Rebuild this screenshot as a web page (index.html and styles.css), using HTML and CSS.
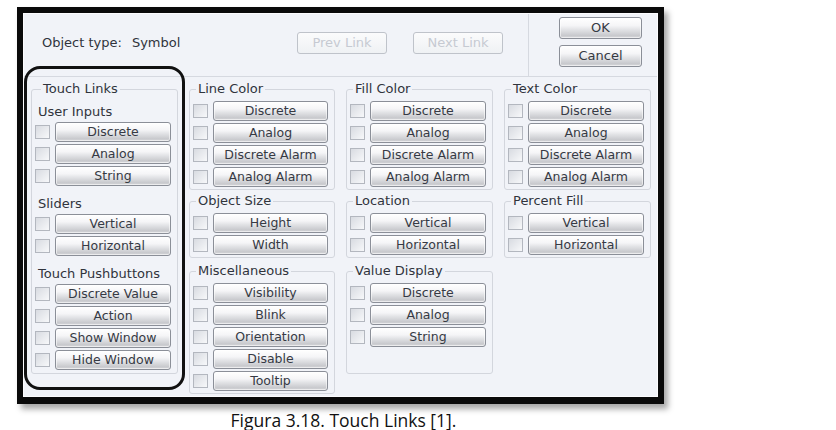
FILE: index.html
```html
<!DOCTYPE html>
<html lang="en">
<head>
<meta charset="utf-8">
<title>Touch Links</title>
<link rel="stylesheet" href="styles.css">
</head>
<body>
<figure class="figure">
  <div class="dialog">
    <div class="dialog-inner">
      <div class="topbar">
        <div class="objinfo">
          <span class="objtype">Object type:</span>
          <span class="objname">Symbol</span>
          <div class="nav">
            <button class="btn btn-nav" disabled>Prev Link</button>
            <button class="btn btn-nav" disabled>Next Link</button>
          </div>
        </div>
        <div class="actions">
          <button class="btn btn-action">OK</button>
          <button class="btn btn-action">Cancel</button>
        </div>
      </div>

      <div class="groups">
        <fieldset class="group touch">
          <legend>Touch Links</legend>
          <div class="sub sub-first">User Inputs</div>
          <div class="rows">
            <div class="row"><span class="chk"></span><button class="btn">Discrete</button></div>
            <div class="row"><span class="chk"></span><button class="btn">Analog</button></div>
            <div class="row"><span class="chk"></span><button class="btn">String</button></div>
          </div>
          <div class="sub">Sliders</div>
          <div class="rows">
            <div class="row"><span class="chk"></span><button class="btn">Vertical</button></div>
            <div class="row"><span class="chk"></span><button class="btn">Horizontal</button></div>
          </div>
          <div class="sub">Touch Pushbuttons</div>
          <div class="rows">
            <div class="row"><span class="chk"></span><button class="btn">Discrete Value</button></div>
            <div class="row"><span class="chk"></span><button class="btn">Action</button></div>
            <div class="row"><span class="chk"></span><button class="btn">Show Window</button></div>
            <div class="row"><span class="chk"></span><button class="btn">Hide Window</button></div>
          </div>
        </fieldset>

        <fieldset class="group">
          <legend>Line Color</legend>
          <div class="rows">
            <div class="row"><span class="chk"></span><button class="btn">Discrete</button></div>
            <div class="row"><span class="chk"></span><button class="btn">Analog</button></div>
            <div class="row"><span class="chk"></span><button class="btn">Discrete Alarm</button></div>
            <div class="row"><span class="chk"></span><button class="btn">Analog Alarm</button></div>
          </div>
        </fieldset>

        <fieldset class="group">
          <legend>Fill Color</legend>
          <div class="rows">
            <div class="row"><span class="chk"></span><button class="btn">Discrete</button></div>
            <div class="row"><span class="chk"></span><button class="btn">Analog</button></div>
            <div class="row"><span class="chk"></span><button class="btn">Discrete Alarm</button></div>
            <div class="row"><span class="chk"></span><button class="btn">Analog Alarm</button></div>
          </div>
        </fieldset>

        <fieldset class="group">
          <legend>Text Color</legend>
          <div class="rows">
            <div class="row"><span class="chk"></span><button class="btn">Discrete</button></div>
            <div class="row"><span class="chk"></span><button class="btn">Analog</button></div>
            <div class="row"><span class="chk"></span><button class="btn">Discrete Alarm</button></div>
            <div class="row"><span class="chk"></span><button class="btn">Analog Alarm</button></div>
          </div>
        </fieldset>

        <fieldset class="group">
          <legend>Object Size</legend>
          <div class="rows">
            <div class="row"><span class="chk"></span><button class="btn">Height</button></div>
            <div class="row"><span class="chk"></span><button class="btn">Width</button></div>
          </div>
        </fieldset>

        <fieldset class="group">
          <legend>Location</legend>
          <div class="rows">
            <div class="row"><span class="chk"></span><button class="btn">Vertical</button></div>
            <div class="row"><span class="chk"></span><button class="btn">Horizontal</button></div>
          </div>
        </fieldset>

        <fieldset class="group">
          <legend>Percent Fill</legend>
          <div class="rows">
            <div class="row"><span class="chk"></span><button class="btn">Vertical</button></div>
            <div class="row"><span class="chk"></span><button class="btn">Horizontal</button></div>
          </div>
        </fieldset>

        <fieldset class="group group-late">
          <legend>Miscellaneous</legend>
          <div class="rows">
            <div class="row"><span class="chk"></span><button class="btn">Visibility</button></div>
            <div class="row"><span class="chk"></span><button class="btn">Blink</button></div>
            <div class="row"><span class="chk"></span><button class="btn">Orientation</button></div>
            <div class="row"><span class="chk"></span><button class="btn">Disable</button></div>
            <div class="row"><span class="chk"></span><button class="btn">Tooltip</button></div>
          </div>
        </fieldset>

        <fieldset class="group group-late group-value">
          <legend>Value Display</legend>
          <div class="rows">
            <div class="row"><span class="chk"></span><button class="btn">Discrete</button></div>
            <div class="row"><span class="chk"></span><button class="btn">Analog</button></div>
            <div class="row"><span class="chk"></span><button class="btn">String</button></div>
          </div>
        </fieldset>
      </div>

      <div class="callout"></div>
    </div>
  </div>
  <figcaption class="caption">Figura 3.18. Touch Links [1].</figcaption>
</figure>
</body>
</html>
```

FILE: styles.css
```css
html, body {
  margin: 0;
  background: #ffffff;
}

body {
  width: 836px;
  height: 430px;
  overflow: hidden;
}

.figure {
  margin: 0;
  padding: 7px 0 0 17px;
}

/* Dialog window with its heavy black frame */
.dialog {
  width: 647px;
  height: 397px;
  box-sizing: border-box;
  border: 6px solid #0a0a0a;
  border-bottom-width: 7px;
  background: #f1f3f8;
  box-shadow: 4px 5px 6px rgba(0, 0, 0, 0.35);
  font-family: "DejaVu Sans", sans-serif;
  color: #30343c;
}

.dialog-inner {
  position: relative;
  height: 100%;
  box-sizing: border-box;
  border: 1px solid #fcfcfe;
  overflow: hidden;
}

/* Header: object type, link navigation, OK / Cancel */
.topbar {
  display: flex;
  height: 62px;
  border-bottom: 1px solid #d6d9e0;
}

.objinfo {
  width: 505px;
  box-sizing: border-box;
  display: flex;
  align-items: flex-start;
  padding: 18px 25px 0 18px;
  border-right: 1px solid #d6d9e0;
  font-size: 13px;
  line-height: 22px;
}

.objname {
  margin-left: 10px;
}

.nav {
  display: flex;
  gap: 26px;
  margin-left: auto;
}

.actions {
  display: flex;
  flex-direction: column;
  gap: 6px;
  padding: 3px 0 0 30px;
}

/* Silver push buttons */
.btn {
  height: 20px;
  box-sizing: border-box;
  padding: 0;
  border: 1px solid #8b8f98;
  border-radius: 3px;
  background: linear-gradient(#ffffff 0%, #f5f5f7 38%, #e2e3e6 58%, #c8c9cd 88%, #d8d9dc 100%);
  box-shadow: inset 0 0 0 1px rgba(255, 255, 255, 0.55);
  font: 12.5px/18px "DejaVu Sans", sans-serif;
  color: #363a44;
  text-align: center;
  white-space: nowrap;
}

.btn-nav {
  width: 90px;
  height: 22px;
  border-color: #bfc3ca;
  background: linear-gradient(#fbfbfc, #eff1f4);
  box-shadow: none;
  color: #c6cad2;
  font-size: 13px;
}

.btn-action {
  width: 83px;
  height: 22px;
  font-size: 13px;
}

/* Link groups */
.groups {
  display: grid;
  grid-template-columns: 147px 146px 147px 147px;
  column-gap: 11px;
  row-gap: 3px;
  align-items: start;
  padding: 4px 0 0 7px;
}

.group {
  margin: 0;
  min-width: 0;
  padding: 4px 6px 2px 3px;
  border: 1px solid #d3d6dd;
  border-radius: 3px;
}

.group legend {
  margin-left: 3px;
  padding: 0 2px;
  font-size: 13px;
  line-height: 16px;
  color: #30343c;
}

.group-late {
  margin-top: 2px;
}

.group-value {
  padding-bottom: 26px;
}

.touch {
  grid-row: 1 / span 3;
  padding: 7px 6px 3px 3px;
}

.touch legend {
  margin-left: 6px;
}

.sub {
  margin: 10px 0 2px 3px;
  font-size: 13px;
  line-height: 16px;
}

.sub-first {
  margin-top: 0;
}

.rows {
  display: flex;
  flex-direction: column;
  gap: 2px;
}

.row {
  display: flex;
  align-items: center;
  gap: 5px;
  height: 20px;
}

.row .btn {
  flex: 1;
  min-width: 0;
}

.chk {
  flex: none;
  width: 15px;
  height: 14px;
  box-sizing: border-box;
  border: 1px solid #b3b7bf;
  background: linear-gradient(135deg, #d8dbe1, #f7f8fa);
}

/* Hand-drawn highlight ring around the Touch Links group */
.callout {
  position: absolute;
  left: 0;
  top: 52px;
  width: 161px;
  height: 324px;
  box-sizing: border-box;
  border: 3px solid #111111;
  border-radius: 16px;
  pointer-events: none;
}

.caption {
  width: 647px;
  box-sizing: border-box;
  margin-top: 4px;
  padding-left: 6px;
  text-align: center;
  font: 17.5px/24px "Open Sans", sans-serif;
  color: #111111;
}
```
